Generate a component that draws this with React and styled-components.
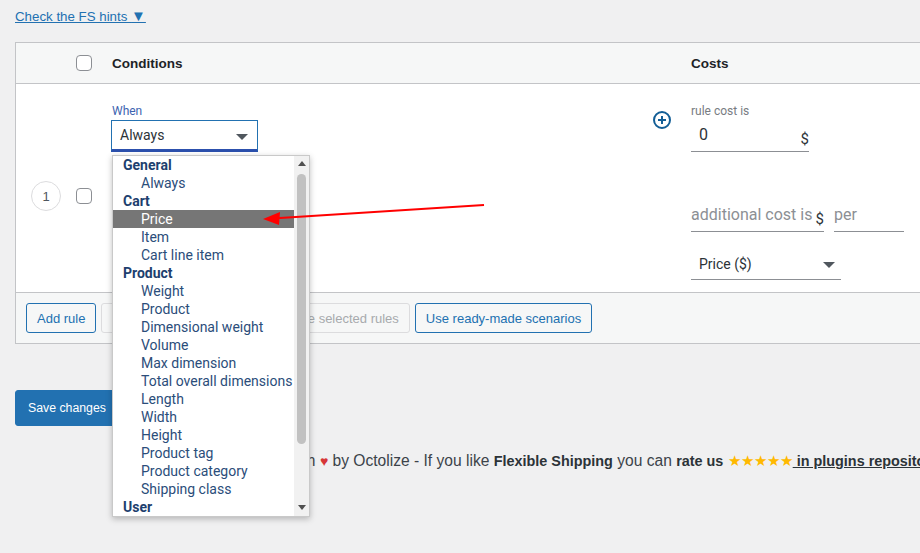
import React from 'react';
import styled, { createGlobalStyle } from 'styled-components';

const GlobalStyle = createGlobalStyle`
  html, body {
    margin: 0;
    padding: 0;
    background: #f0f0f1;
    overflow: hidden;
  }
  body {
    font-family: "Liberation Sans", Arial, sans-serif;
    color: #3c434a;
  }
`;

const conditionGroups = [
  { name: 'General', items: ['Always'] },
  { name: 'Cart', items: ['Price', 'Item', 'Cart line item'] },
  {
    name: 'Product',
    items: [
      'Weight',
      'Product',
      'Dimensional weight',
      'Volume',
      'Max dimension',
      'Total overall dimensions',
      'Length',
      'Width',
      'Height',
      'Product tag',
      'Product category',
      'Shipping class',
    ],
  },
  { name: 'User', items: [] },
];

export default function App() {
  return (
    <Page>
      <GlobalStyle />
      <HintsLink href="#">
        Check the FS hints <HintsCaret>▼</HintsCaret>
      </HintsLink>

      <Table>
        <HeadRow>
          <Cell />
          <Cell>
            <Checkbox />
          </Cell>
          <HeadTitle>Conditions</HeadTitle>
          <Cell />
          <HeadTitle>Costs</HeadTitle>
        </HeadRow>

        <BodyRow>
          <CenterCell>
            <RowNumber>1</RowNumber>
          </CenterCell>
          <CenterCell>
            <Checkbox />
          </CenterCell>
          <ConditionCell>
            <FieldLabel $blue>When</FieldLabel>
            <SelectWrap>
              <ConditionSelect>
                <span>Always</span>
                <Caret />
              </ConditionSelect>
              <Dropdown>
                <OptionList>
                  {conditionGroups.map(group => (
                    <React.Fragment key={group.name}>
                      <GroupLabel>{group.name}</GroupLabel>
                      {group.items.map(item => (
                        <OptionItem key={group.name + item} $active={item === 'Price'}>
                          {item}
                        </OptionItem>
                      ))}
                    </React.Fragment>
                  ))}
                </OptionList>
                <Scrollbar>
                  <ScrollArrow $up />
                  <ScrollThumb />
                  <ScrollArrow />
                </Scrollbar>
              </Dropdown>
            </SelectWrap>
          </ConditionCell>
          <PlusCell>
            <svg width="20" height="20" viewBox="0 0 20 20">
              <circle cx="10" cy="10" r="8" fill="none" stroke="#135e96" strokeWidth="2" />
              <path d="M10 6v8M6 10h8" stroke="#135e96" strokeWidth="2" />
            </svg>
          </PlusCell>
          <CostCell>
            <FieldLabel>rule cost is</FieldLabel>
            <LineInput $width={118}>
              <InputValue>0</InputValue>
              <Currency>$</Currency>
            </LineInput>
            <CostLine>
              <LineInput $width={133} $tall>
                <Placeholder>additional cost is</Placeholder>
                <Currency>$</Currency>
              </LineInput>
              <LineInput $width={70} $tall>
                <Placeholder>per</Placeholder>
              </LineInput>
            </CostLine>
            <LineSelect>
              <span>Price ($)</span>
              <Caret />
            </LineSelect>
          </CostCell>
        </BodyRow>

        <FootRow>
          <OutlineButton>Add rule</OutlineButton>
          <OutlineButton disabled>Delete selected rules</OutlineButton>
          <OutlineButton disabled>Duplicate selected rules</OutlineButton>
          <OutlineButton>Use ready-made scenarios</OutlineButton>
        </FootRow>
      </Table>

      <SaveButton>Save changes</SaveButton>

      <FooterText>
        Created with <Heart>♥</Heart> by Octolize - If you like <strong>Flexible Shipping</strong> you
        can <strong>rate us</strong> <Stars>★★★★★</Stars>
        <RepoLink href="#"> in plugins repository</RepoLink>
      </FooterText>

      <Annotation width="920" height="553" viewBox="0 0 920 553">
        <line x1="484" y1="205" x2="272" y2="218.4" stroke="#f00" strokeWidth="2" />
        <polygon points="263,219 280,212 279,225" fill="#f00" />
      </Annotation>
    </Page>
  );
}

const Page = styled.div`
  position: relative;
  width: 920px;
  height: 553px;
  padding: 7px 0 0 15px;
  box-sizing: border-box;
`;

const HintsLink = styled.a`
  display: inline-block;
  height: 20px;
  font-size: 13.3px;
  line-height: 20px;
  color: #2271b1;
  text-decoration: underline;
`;

const HintsCaret = styled.span`
  font-size: 15px;
  line-height: 1;
`;

const Table = styled.div`
  margin-top: 15px;
  width: 1000px;
  border: 1px solid #c3c4c7;
  background: #fff;
`;

const rowColumns = '60px 36px 540px 39px 1fr';

const HeadRow = styled.div`
  display: grid;
  grid-template-columns: ${rowColumns};
  height: 40px;
  align-items: center;
  background: #f6f7f7;
  border-bottom: 1px solid #c3c4c7;
`;

const Cell = styled.div`
  display: flex;
  align-items: center;
`;

const HeadTitle = styled.div`
  font-size: 13.5px;
  font-weight: 700;
  color: #1d2327;
`;

const Checkbox = styled.span`
  display: block;
  width: 14px;
  height: 14px;
  border: 1px solid #8c8f94;
  border-radius: 4px;
  background: #fff;
`;

const BodyRow = styled.div`
  display: grid;
  grid-template-columns: ${rowColumns};
  height: 208px;
  border-bottom: 1px solid #c3c4c7;
`;

const CenterCell = styled.div`
  display: flex;
  align-items: center;
  padding-top: 16px;
`;

const RowNumber = styled.span`
  display: flex;
  align-items: center;
  justify-content: center;
  width: 28px;
  height: 28px;
  margin-left: 15px;
  border: 1px solid #dcdcde;
  border-radius: 50%;
  font-size: 13px;
  color: #50575e;
`;

const ConditionCell = styled.div`
  padding-top: 20px;
  font-family: Roboto, sans-serif;
`;

const FieldLabel = styled.div`
  font-family: Roboto, sans-serif;
  font-size: 12px;
  line-height: 14px;
  color: ${p => (p.$blue ? '#3d63b0' : '#787c82')};
`;

const SelectWrap = styled.div`
  position: relative;
  width: 147px;
  margin-top: 2px;
  margin-left: -1px;
`;

const ConditionSelect = styled.div`
  display: flex;
  align-items: center;
  justify-content: space-between;
  height: 28px;
  padding: 0 9px 0 8px;
  border: 1px solid #2271b1;
  border-bottom: 3px solid #2c50ad;
  font-size: 14px;
  color: #2c3338;
`;

const Caret = styled.span`
  width: 0;
  height: 0;
  margin-top: 3px;
  border-left: 6px solid transparent;
  border-right: 6px solid transparent;
  border-top: 6px solid #50575e;
`;

const Dropdown = styled.div`
  position: absolute;
  top: 35px;
  left: 1px;
  z-index: 5;
  display: flex;
  width: 198px;
  height: 362px;
  box-sizing: border-box;
  border: 1px solid #c9c9c9;
  background: #fff;
  box-shadow: 0 2px 6px rgba(0, 0, 0, 0.25);
`;

const OptionList = styled.div`
  flex: 1;
`;

const GroupLabel = styled.div`
  height: 18px;
  padding-left: 10px;
  font-family: Roboto, sans-serif;
  font-size: 14px;
  line-height: 18px;
  font-weight: 700;
  color: #1d3f6e;
`;

const OptionItem = styled.div`
  height: 18px;
  padding-left: 28px;
  font-family: Roboto, sans-serif;
  font-size: 14px;
  line-height: 18px;
  white-space: nowrap;
  color: ${p => (p.$active ? '#fff' : '#2b4d7a')};
  background: ${p => (p.$active ? '#767676' : 'transparent')};
`;

const Scrollbar = styled.div`
  display: flex;
  flex-direction: column;
  align-items: center;
  width: 15px;
  background: #f1f1f1;
`;

const ScrollArrow = styled.span`
  width: 0;
  height: 0;
  margin: ${p => (p.$up ? '5px 0 8px' : '8px 0 6px')};
  border-left: 4px solid transparent;
  border-right: 4px solid transparent;
  ${p => (p.$up ? 'border-bottom: 5px solid #505050;' : 'border-top: 5px solid #505050;')}
`;

const ScrollThumb = styled.span`
  width: 9px;
  height: 270px;
  border-radius: 5px;
  background: #c1c1c1;
  margin-bottom: auto;
`;

const PlusCell = styled.div`
  padding-top: 26px;
`;

const CostCell = styled.div`
  padding-top: 20px;
  font-family: Roboto, sans-serif;
`;

const LineInput = styled.div`
  display: flex;
  align-items: flex-end;
  justify-content: space-between;
  width: ${p => p.$width}px;
  height: ${p => (p.$tall ? 32 : 34)}px;
  box-sizing: border-box;
  padding-bottom: 6px;
  border-bottom: 1px solid #8c8f94;
`;

const InputValue = styled.span`
  padding-left: 8px;
  font-size: 16px;
  line-height: 20px;
  color: #2c3338;
`;

const Placeholder = styled.span`
  font-size: 16px;
  line-height: 20px;
  color: #8c8f94;
`;

const Currency = styled.span`
  font-size: 15px;
  line-height: 18px;
  color: #2c3338;
  margin-bottom: -3px;
`;

const CostLine = styled.div`
  display: flex;
  gap: 10px;
  margin-top: 48px;
`;

const LineSelect = styled.div`
  display: flex;
  align-items: center;
  justify-content: space-between;
  width: 150px;
  height: 32px;
  box-sizing: border-box;
  margin-top: 16px;
  padding: 0 6px 0 8px;
  border-bottom: 1px solid #8c8f94;
  font-size: 14px;
  color: #2c3338;
`;

const FootRow = styled.div`
  display: flex;
  gap: 5px;
  height: 50px;
  align-items: center;
  padding-left: 10px;
  background: #f6f7f7;
`;

const OutlineButton = styled.button`
  height: 30px;
  padding: 0 10px;
  border: 1px solid ${p => (p.disabled ? '#dcdcde' : '#2271b1')};
  border-radius: 3px;
  background: #f6f7f7;
  color: ${p => (p.disabled ? '#a7aaad' : '#2271b1')};
  font-family: "Liberation Sans", Arial, sans-serif;
  font-size: 13px;
`;

const SaveButton = styled.button`
  display: block;
  margin-top: 46px;
  height: 36px;
  padding: 0 12px;
  border: 1px solid #2271b1;
  border-radius: 3px;
  background: #2271b1;
  color: #fff;
  font-family: "Liberation Sans", Arial, sans-serif;
  font-size: 12.3px;
`;

const FooterText = styled.p`
  margin: 25px 0 0;
  padding-left: 213px;
  font-size: 15.6px;
  line-height: 20px;
  white-space: nowrap;
  color: #3c434a;

  strong {
    font-weight: 700;
    font-size: 14.4px;
    color: #2c3338;
  }
`;

const Heart = styled.span`
  color: #d63638;
  font-size: 14px;
`;

const Stars = styled.span`
  color: #ffb900;
  font-size: 15px;
`;

const RepoLink = styled.a`
  font-weight: 700;
  font-size: 14.4px;
  color: #2c3338;
  text-decoration: underline;
`;

const Annotation = styled.svg`
  position: absolute;
  top: 0;
  left: 0;
  pointer-events: none;
  z-index: 10;
`;
